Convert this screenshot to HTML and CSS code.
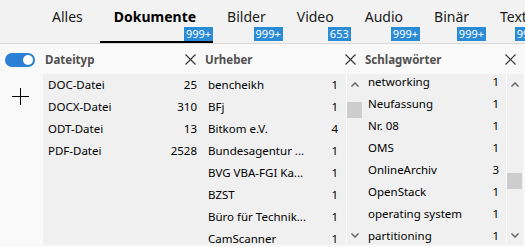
FILE: index.html
```html
<!DOCTYPE html>
<html lang="de">
<head>
<meta charset="utf-8">
<title>Suche</title>
<link rel="stylesheet" href="styles.css">
</head>
<body>
<div class="app">
  <nav class="tabs">
    <div class="tab"><span class="label">Alles</span></div>
    <div class="tab active"><span class="label">Dokumente</span><span class="badge">999+</span></div>
    <div class="tab"><span class="label">Bilder</span><span class="badge">999+</span></div>
    <div class="tab"><span class="label">Video</span><span class="badge">653</span></div>
    <div class="tab"><span class="label">Audio</span><span class="badge">999+</span></div>
    <div class="tab"><span class="label">Binär</span><span class="badge">999+</span></div>
    <div class="tab"><span class="label">Text</span><span class="badge">999+</span></div>
  </nav>
  <div class="main">
    <aside class="side">
      <span class="toggle"><span class="knob"></span></span>
      <svg class="plus" width="17" height="17" viewBox="0 0 17 17"><path d="M8.5 0V17M0 8.5H17" stroke="#000" stroke-width="1"/></svg>
    </aside>

    <section class="facet">
      <header class="facet-head">
        <span class="facet-title">Dateityp</span>
        <svg class="close" width="11" height="11" viewBox="0 0 11 11"><path d="M0.5 0.5L10.5 10.5M10.5 0.5L0.5 10.5" stroke="#333" stroke-width="1.1"/></svg>
      </header>
      <div class="facet-body">
        <ul class="list pad-6">
          <li class="row"><span class="name">DOC-Datei</span><span class="count">25</span></li>
          <li class="row"><span class="name">DOCX-Datei</span><span class="count">310</span></li>
          <li class="row"><span class="name">ODT-Datei</span><span class="count">13</span></li>
          <li class="row"><span class="name">PDF-Datei</span><span class="count">2528</span></li>
        </ul>
      </div>
    </section>

    <section class="facet">
      <header class="facet-head">
        <span class="facet-title">Urheber</span>
        <svg class="close" width="11" height="11" viewBox="0 0 11 11"><path d="M0.5 0.5L10.5 10.5M10.5 0.5L0.5 10.5" stroke="#333" stroke-width="1.1"/></svg>
      </header>
      <div class="facet-body">
        <ul class="list pad-8">
          <li class="row"><span class="name">bencheikh</span><span class="count">1</span></li>
          <li class="row"><span class="name">BFj</span><span class="count">1</span></li>
          <li class="row"><span class="name">Bitkom e.V.</span><span class="count">4</span></li>
          <li class="row"><span class="name">Bundesagentur ...</span><span class="count">1</span></li>
          <li class="row"><span class="name">BVG VBA-FGI Ka...</span><span class="count">1</span></li>
          <li class="row"><span class="name">BZST</span><span class="count">1</span></li>
          <li class="row"><span class="name">Büro für Technik...</span><span class="count">1</span></li>
          <li class="row"><span class="name">CamScanner</span><span class="count">1</span></li>
        </ul>
        <div class="scrollbar">
          <div class="arrow"><svg width="8" height="5" viewBox="0 0 8 5"><path d="M0.5 4.5L4 1L7.5 4.5" fill="none" stroke="#606060" stroke-width="1.4"/></svg></div>
          <div class="track"><div class="thumb" style="margin-top:8px"></div></div>
          <div class="arrow"><svg width="8" height="5" viewBox="0 0 8 5"><path d="M0.5 0.5L4 4L7.5 0.5" fill="none" stroke="#606060" stroke-width="1.4"/></svg></div>
        </div>
      </div>
    </section>

    <section class="facet">
      <header class="facet-head">
        <span class="facet-title">Schlagwörter</span>
        <svg class="close" width="11" height="11" viewBox="0 0 11 11"><path d="M0.5 0.5L10.5 10.5M10.5 0.5L0.5 10.5" stroke="#333" stroke-width="1.1"/></svg>
      </header>
      <div class="facet-body">
        <ul class="list pad-7 scrolled">
          <li class="row"><span class="name">networking</span><span class="count">1</span></li>
          <li class="row"><span class="name">Neufassung</span><span class="count">1</span></li>
          <li class="row"><span class="name">Nr. 08</span><span class="count">1</span></li>
          <li class="row"><span class="name">OMS</span><span class="count">1</span></li>
          <li class="row"><span class="name">OnlineArchiv</span><span class="count">3</span></li>
          <li class="row"><span class="name">OpenStack</span><span class="count">1</span></li>
          <li class="row"><span class="name">operating system</span><span class="count">1</span></li>
          <li class="row"><span class="name">partitioning</span><span class="count">1</span></li>
        </ul>
        <div class="scrollbar">
          <div class="arrow"><svg width="8" height="5" viewBox="0 0 8 5"><path d="M0.5 4.5L4 1L7.5 4.5" fill="none" stroke="#606060" stroke-width="1.4"/></svg></div>
          <div class="track"><div class="thumb" style="margin-top:79px"></div></div>
          <div class="arrow"><svg width="8" height="5" viewBox="0 0 8 5"><path d="M0.5 0.5L4 4L7.5 0.5" fill="none" stroke="#606060" stroke-width="1.4"/></svg></div>
        </div>
      </div>
    </section>
  </div>
</div>
</body>
</html>
```
FILE: styles.css
```css
* { box-sizing: border-box; }
html, body { margin: 0; padding: 0; }
body {
  background: #f9f9f9;
  font-family: "Noto Sans", "Open Sans", sans-serif;
  color: #000;
  width: 525px;
  height: 247px;
  overflow: hidden;
}
.app { width: 525px; }

/* Tabs */
.tabs {
  display: flex;
  height: 44px;
  background: #f2f2f2;
  border-bottom: 1px solid #d9d9d9;
  padding-left: 38px;
  overflow: hidden;
  white-space: nowrap;
}
.tab {
  position: relative;
  flex: none;
  height: 43px;
  padding: 7px 17px 0 14px;
  font-size: 14px;
  line-height: 20px;
  color: #1a1a1a;
}
.tab.active { font-weight: 700; color: #000; }
.tab.active::after {
  content: "";
  position: absolute;
  left: 0; right: 0; bottom: 0;
  height: 2px;
  background: #000;
}
.badge {
  position: absolute;
  right: 0;
  bottom: 2px;
  height: 14px;
  padding: 0 2px;
  background: #2a8bd6;
  color: #fff;
  font-size: 11px;
  font-weight: 400;
  line-height: 14px;
}

/* Main area */
.main {
  display: flex;
  height: 201px;
}
.side {
  flex: none;
  width: 43px;
  background: #f9f9f9;
  display: flex;
  flex-direction: column;
  padding: 9px 0 0 5px;
}
.toggle {
  position: relative;
  display: block;
  width: 30px;
  height: 14px;
  border-radius: 7px;
  background: #2b7fd4;
}
.knob {
  position: absolute;
  right: 2px;
  top: 2px;
  width: 10px;
  height: 10px;
  border-radius: 50%;
  background: #fff;
}
.plus { margin: 21px 0 0 7px; display: block; }

.facet {
  flex: none;
  width: 160px;
  display: flex;
  flex-direction: column;
}
.facet-head {
  height: 30px;
  flex: none;
  background: #f9f9f9;
  display: flex;
  align-items: center;
  justify-content: space-between;
  padding: 1px 7px 0 2px;
}
.facet-title {
  font-size: 11.5px;
  font-weight: 700;
  color: #505050;
}
.close { display: block; margin-top: -1px; }

.facet-body {
  flex: 1;
  background: #f0f0f0;
  display: flex;
  overflow: hidden;
}
.list {
  flex: 1;
  min-width: 0;
  margin: 0;
  padding: 0;
  list-style: none;
  overflow: hidden;
}
.list.scrolled .row:first-child { margin-top: -3px; }
.row {
  display: flex;
  justify-content: space-between;
  height: 22px;
  line-height: 22px;
  font-size: 11.5px;
  padding-left: 5px;
  white-space: nowrap;
}
.pad-6 .row { padding-right: 6px; }
.pad-7 .row { padding-right: 7px; }
.pad-8 .row { padding-right: 8px; }
.name { overflow: hidden; }

.scrollbar {
  flex: none;
  width: 17px;
  border-left: 1px solid #fbfbfb;
  display: flex;
  flex-direction: column;
}
.arrow {
  height: 20px;
  flex: none;
  display: flex;
  align-items: center;
  justify-content: center;
}
.arrow svg { display: block; }
.track { flex: 1; }
.thumb {
  width: 15px;
  height: 16px;
  background: #cdcdcd;
}
```
